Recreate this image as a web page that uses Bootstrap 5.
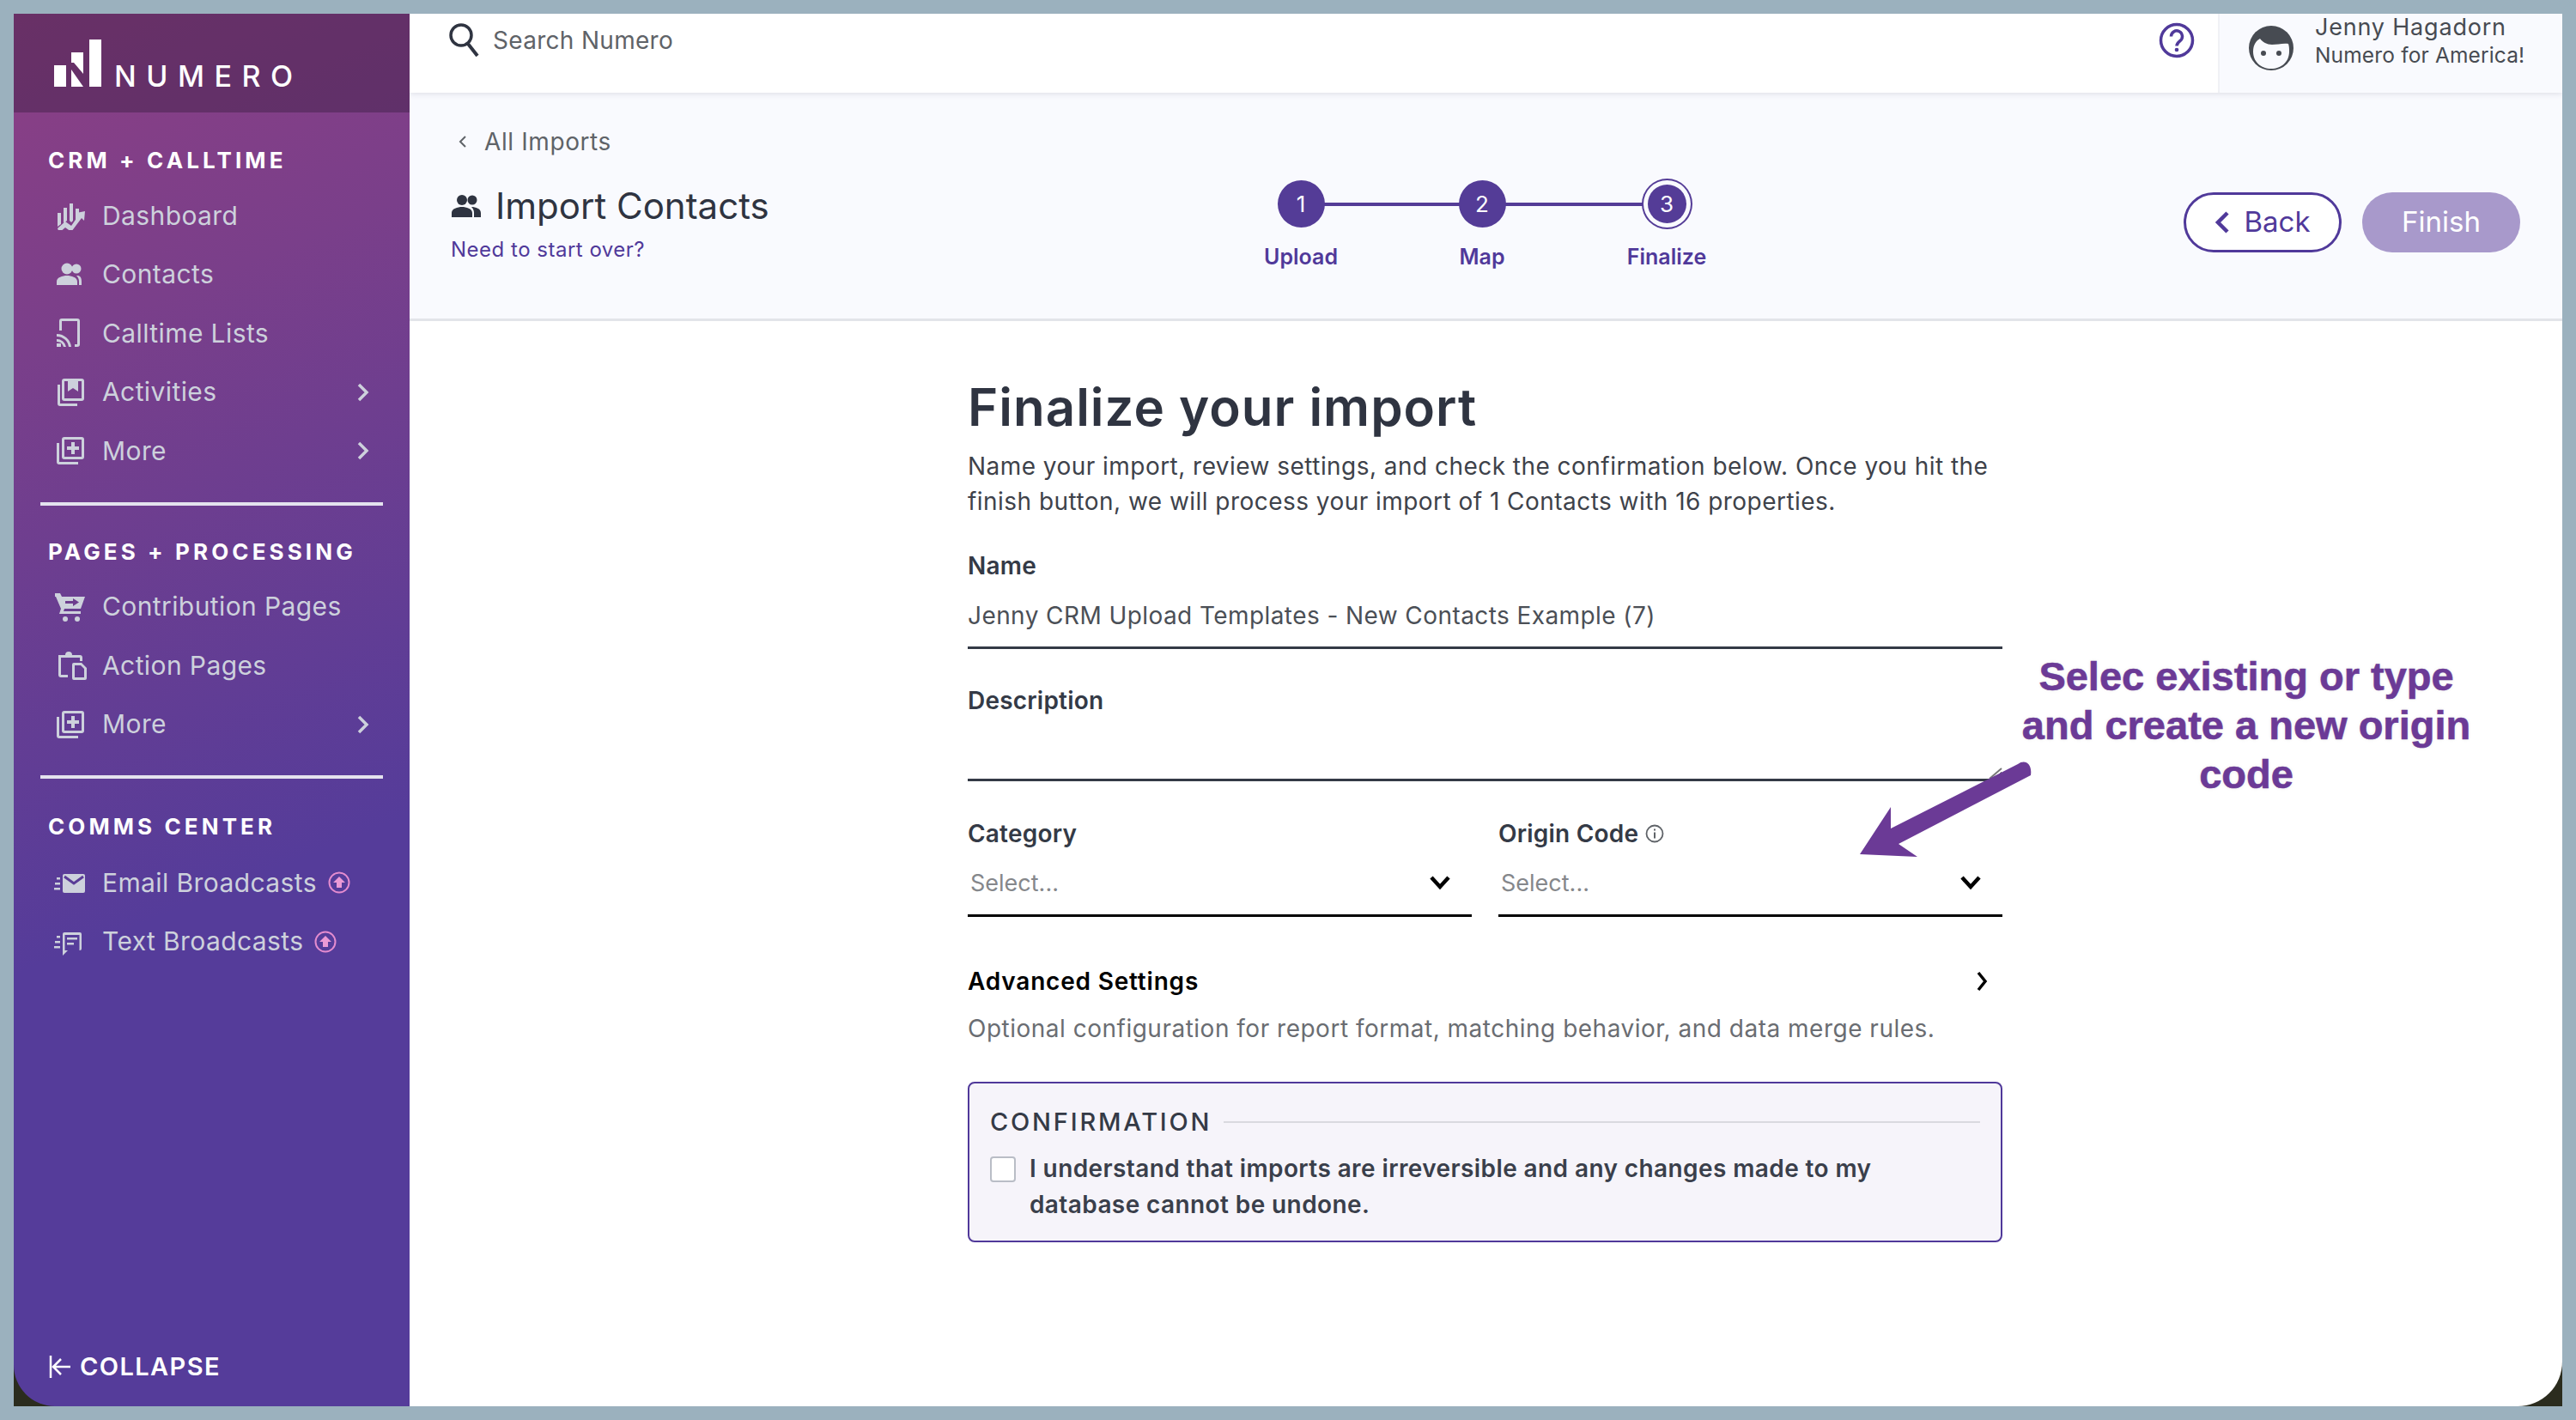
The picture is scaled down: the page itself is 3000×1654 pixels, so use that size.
<!DOCTYPE html>
<html lang="en">
<head>
  <meta charset="UTF-8">
  <meta name="viewport" content="width=device-width, initial-scale=1">
  <title>Import Contacts - Numero</title>

  <link rel="stylesheet" href="https://cdn.jsdelivr.net/npm/bootstrap@5.3.0/dist/css/bootstrap.min.css">

  <style>
    body {
      font-family: Inter, "Open Sans", sans-serif;
      background-color: #9bb1be;
      padding: 16px;
      height: 1654px;
      overflow: hidden;
    }
    .app-frame {
      width: 2968px;
      height: 1622px;
      background-color: #2b2c1e;
      position: relative;
    }
    /* sidebar */
    .side-panel {
      width: 461px;
      flex: none;
      background: linear-gradient(158deg, #8c3f84 0%, #7a3f8a 22%, #553c9a 62%);
      border-bottom-left-radius: 48px;
    }
    .side-brand {
      height: 115px;
      background-color: rgba(30, 20, 40, .32);
      padding: 30px 0 0 47px;
      color: #fff;
    }
    .brand-word {
      font-size: 34px;
      line-height: 38px;
      letter-spacing: 11.5px;
      font-weight: 500;
      margin: 24px 0 0 -4px;
    }
    .side-title {
      color: #fff;
      font-size: 26px;
      line-height: 36px;
      font-weight: 700;
      letter-spacing: 4.1px;
      text-transform: uppercase;
      padding-left: 40px;
    }
    .side-link {
      height: 68.5px;
      color: #cdd1dc;
      font-size: 30px;
      letter-spacing: .4px;
      padding: 0 47px 0 49px;
    }
    .side-link:hover { color: #fff; }
    .side-link .side-icon {
      width: 55px;
      height: 34px;
      margin-right: 10px;
      margin-left: -11px;
      flex: none;
      fill: #cdd1dc;
    }
    .side-rule {
      height: 4px;
      background-color: #e4e2ee;
      opacity: 1;
      border: 0;
      margin: 0 31px;
    }
    .upgrade-dot { width: 26px; height: 26px; margin-left: 13px; flex: none; }
    .collapse-link {
      color: #fff;
      font-size: 29px;
      font-weight: 600;
      letter-spacing: 1.4px;
      line-height: 36px;
      padding-left: 41px;
      margin-bottom: 28px;
    }
    .collapse-arrow { margin-right: 10px; }
    /* top bar */
    .top-strip {
      height: 92px;
      background-color: #fff;
      box-shadow: 0 2px 6px rgba(60, 60, 80, .12);
      position: relative;
    }
    .search-wrap { padding-left: 43px; }
    .search-text { color: #5f6368; font-size: 28px; letter-spacing: .3px; line-height: 40px; margin: 11px 0 0 14px; }
    .help-mark { margin: 10px 27px 0 0; }
    .user-panel {
      width: 401px;
      height: 92px;
      background-color: #f9fafe;
      border-left: 2px solid #f0f1f5;
      padding: 0 0 0 33px;
      color: #474b52;
    }
    .user-face { margin-top: 13px; }
    .user-text { margin-left: 24px; }
    .user-name { font-size: 27px; letter-spacing: .8px; line-height: 32px; }
    .user-org { font-size: 24.5px; letter-spacing: .15px; line-height: 32px; }
    /* page header */
    .head-band {
      height: 266px;
      background-color: #f9fafe;
      border-bottom: 3px solid #e2e4e9;
      padding: 0 49px 0 48px;
      display: grid;
      grid-template-columns: 1fr auto 1fr;
    }
    .crumb-link { color: #5f6368; font-size: 28px; letter-spacing: .6px; line-height: 40px; margin-top: 37px; }
    .crumb-arrow { margin: 0 20px 0 9px; }
    .page-title { color: #2f3441; font-size: 42px; line-height: 60px; font-weight: 400; margin: 25px 0 0; }
    .restart-link { color: #50399a; font-size: 24px; letter-spacing: .5px; line-height: 36px; margin-top: 3px; text-decoration: none; display: block; }
    .step-box { position: relative; text-align: center; padding-top: 102px; }
    .step-dot {
      width: 55px;
      height: 55px;
      line-height: 55px;
      border-radius: 50%;
      background-color: #543c97;
      color: #fff;
      font-size: 26px;
      margin: 0 auto;
      position: relative;
      z-index: 1;
    }
    .step-dot.is-current {
      width: 45px;
      height: 45px;
      line-height: 45px;
      margin: 5px auto 21px;
      box-shadow: 0 0 0 5px #f9fafe, 0 0 0 7px #543c97;
    }
    .step-line {
      position: absolute;
      top: 128px;
      height: 4px;
      left: 50%;
      background-color: #543c97;
    }
    .step-name { color: #50399a; font-size: 25px; line-height: 36px; font-weight: 600; margin-top: 16px; }
    .head-btn {
      height: 70px;
      width: 184px;
      margin-top: 116px;
      border-radius: 35px;
      font-size: 33px;
      padding: 0;
      display: flex;
      align-items: center;
      justify-content: center;
    }
    .back-btn { background-color: #fff; border: 3px solid #50399a; color: #50399a; }
    .finish-btn { background-color: #a899cb; border: 0; color: #fff; opacity: 1; }
    .finish-btn:disabled { background-color: #a899cb; color: #fff; opacity: 1; }
    /* form */
    .form-body { width: 1205px; margin-left: 650px; color: #343a46; }
    .form-heading { font-size: 60px; line-height: 72px; font-weight: 600; letter-spacing: 1px; margin: 64px 0 13px; color: #2f3441; }
    .form-lead { font-size: 28px; letter-spacing: .46px; line-height: 41px; margin: 0; color: #3e424a; }
    .field-label { font-size: 28px; letter-spacing: .2px; line-height: 40px; font-weight: 600; margin: 1px 0 -1px; color: #343a46; }
    .line-input {
      border: 0;
      border-bottom: 3px solid #343a46;
      border-radius: 0;
      background: transparent;
      box-shadow: none;
      font-size: 28px;
      letter-spacing: .42px;
      color: #4b4f56;
      padding: 2px 0 0;
    }
    .line-select {
      height: 78px;
      font-size: 27px;
      color: #85878b;
      border: 0;
      border-bottom: 3px solid #000;
      border-radius: 0;
      padding: 4px 0 0 3px;
      background-position: right 24px center;
      background-size: 26px 18px;
      background-image: url("data:image/svg+xml,%3csvg xmlns='http://www.w3.org/2000/svg' viewBox='0 0 26 18'%3e%3cpath fill='none' stroke='%23000' stroke-width='4.5' d='M3 3l10 11L23 3'/%3e%3c/svg%3e");
    }
    .select-pair { --bs-gutter-x: 31px; }
    .more-title { font-size: 28px; letter-spacing: .8px; line-height: 40px; font-weight: 600; color: #000; margin-top: 55px; }
    .more-arrow { margin-right: 17px; }
    .more-note { font-size: 28px; letter-spacing: .5px; line-height: 40px; color: #6a6d72; margin-top: 15px; }
    .confirm-box {
      height: 187px;
      margin-top: 42px;
      background-color: #f6f4fa;
      border: 2px solid #50399a;
      border-radius: 8px;
      padding: 25px 24px 0 24px;
    }
    .confirm-head { font-size: 29px; line-height: 40px; letter-spacing: 2.8px; font-weight: 500; color: #343a46; }
    .confirm-rule { height: 2px; background-color: #d9d9df; flex-grow: 1; margin-left: 14px; }
    .confirm-check {
      width: 30px;
      height: 30px;
      margin: 20px 16px 0 0;
      border: 2px solid #b9bdc6;
      border-radius: 6px;
      flex: none;
      background-color: #fff;
    }
    .confirm-text { font-size: 28px; letter-spacing: .4px; line-height: 42px; font-weight: 600; color: #3a3f4b; margin: 13px 0 0 0; }
    /* note laid over the screenshot */
    .note-text {
      position: absolute;
      left: 2290px;
      top: 743px;
      width: 620px;
      text-align: center;
      font-family: "Liberation Sans", Arial, sans-serif;
      font-weight: 700;
      font-size: 47px;
      line-height: 57px;
      color: #6b3a96;
      -webkit-text-stroke: .6px #6b3a96;
      text-shadow: 0 0 4px #e8e8e8;
      margin: 0;
    }
    .note-arrow { position: absolute; left: 2100px; top: 860px; width: 300px; height: 160px; }
  </style>
</head>
<body>
  <div class="app-frame d-flex">
    <!-- Sidebar -->
    <aside class="side-panel d-flex flex-column">
      <div class="side-brand d-flex align-items-start">
        <svg width="74" height="58" viewBox="0 0 74 58" fill="#fff">
          <path d="M0 30h14v25H0zM20 15h14v25L23 27h-3zM41 0h14v55H41zM20 35l14 20H20z"/>
        </svg>
        <div class="brand-word">NUMERO</div>
      </div>

      <div class="side-title" style="margin-top:38px">CRM + Calltime</div>
      <nav class="nav flex-column" style="margin-top:12px">
        <a class="nav-link side-link d-flex align-items-center" href="#">
          <svg class="side-icon" viewBox="0 0 55 34"><path d="M13 14h4v13l-4 3zM20 8h4v15l-4 3zM27 3h4v20l-2 2-2-2zM34 9h4v10l-4 4z"/><path d="M13 32l9-8 7 5 9-13-3-2 10-2-1 11-3-3-12 16-7-5-7 6z"/></svg>
          Dashboard
        </a>
        <a class="nav-link side-link d-flex align-items-center" href="#">
          <svg class="side-icon" viewBox="0 0 55 34"><circle cx="24" cy="10" r="6.5"/><circle cx="35" cy="10" r="5.5"/><path d="M12 29v-4c0-5 7-7 12-7s12 2 12 7v4zM38 29v-4c0-3-1-5-3-7 4-.5 6 2 6 7v4z"/></svg>
          Contacts
        </a>
        <a class="nav-link side-link d-flex align-items-center" href="#">
          <svg class="side-icon" viewBox="0 0 55 34"><path d="M18 0h18a3 3 0 0 1 3 3v27a3 3 0 0 1-3 3h-3v-3h3V3H18v11h-3V3a3 3 0 0 1 3-3z"/><path d="M12 18a17 17 0 0 1 17 15h-3a14 14 0 0 0-14-12zM12 24a11 11 0 0 1 11 9h-3a8 8 0 0 0-8-6zM12 29h5v4h-5z"/></svg>
          Calltime Lists
        </a>
        <a class="nav-link side-link d-flex align-items-center" href="#">
          <svg class="side-icon" viewBox="0 0 55 34"><path d="M13 8h3v22h20v3H16a3 3 0 0 1-3-3z"/><path fill-rule="evenodd" d="M21 1h20a3 3 0 0 1 3 3v20a3 3 0 0 1-3 3H21a3 3 0 0 1-3-3V4a3 3 0 0 1 3-3zm0 3v20h20V4h-4v12l-6-4-6 4V4z"/></svg>
          Activities
          <svg class="ms-auto" width="14" height="22" viewBox="0 0 14 22"><path d="M2 2l9 9-9 9" fill="none" stroke="#cdd1dc" stroke-width="3.5"/></svg>
        </a>
        <a class="nav-link side-link d-flex align-items-center" href="#">
          <svg class="side-icon" viewBox="0 0 55 34"><path d="M12 8h3v22h22v3H15a3 3 0 0 1-3-3z"/><path fill-rule="evenodd" d="M21 1h20a3 3 0 0 1 3 3v20a3 3 0 0 1-3 3H21a3 3 0 0 1-3-3V4a3 3 0 0 1 3-3zm0 3v20h20V4zm8 3h4v5h5v4h-5v5h-4v-5h-5v-4h5z"/></svg>
          More
          <svg class="ms-auto" width="14" height="22" viewBox="0 0 14 22"><path d="M2 2l9 9-9 9" fill="none" stroke="#cdd1dc" stroke-width="3.5"/></svg>
        </a>
      </nav>
      <hr class="side-rule" style="margin-top:25px">

      <div class="side-title" style="margin-top:36px">Pages + Processing</div>
      <nav class="nav flex-column" style="margin-top:12px">
        <a class="nav-link side-link d-flex align-items-center" href="#">
          <svg class="side-icon" viewBox="0 0 55 34"><path d="M10 1h6l2 4h27l-5 14H21l-1 3h20v3H15l2-6-6-14h-1z"/><circle cx="22" cy="31" r="3"/><circle cx="36" cy="31" r="3"/><path d="M22 10h9V7l7 4.500-7 4.500v-3h-9z" fill="#6d3d8e"/></svg>
          Contribution Pages
        </a>
        <a class="nav-link side-link d-flex align-items-center" href="#">
          <svg class="side-icon" viewBox="0 0 55 34"><path d="M14 5h8a4 4 0 0 1 8 0h9a3 3 0 0 1 3 3v4h-3V8H17v20h8v3h-8a3 3 0 0 1-3-3z"/><path fill-rule="evenodd" d="M32 14h9l6 6v12a2 2 0 0 1-2 2H32a2 2 0 0 1-2-2V16a2 2 0 0 1 2-2zm1 3v14h11V21l-4-4z"/></svg>
          Action Pages
        </a>
        <a class="nav-link side-link d-flex align-items-center" href="#">
          <svg class="side-icon" viewBox="0 0 55 34"><path d="M12 8h3v22h22v3H15a3 3 0 0 1-3-3z"/><path fill-rule="evenodd" d="M21 1h20a3 3 0 0 1 3 3v20a3 3 0 0 1-3 3H21a3 3 0 0 1-3-3V4a3 3 0 0 1 3-3zm0 3v20h20V4zm8 3h4v5h5v4h-5v5h-4v-5h-5v-4h5z"/></svg>
          More
          <svg class="ms-auto" width="14" height="22" viewBox="0 0 14 22"><path d="M2 2l9 9-9 9" fill="none" stroke="#cdd1dc" stroke-width="3.5"/></svg>
        </a>
      </nav>
      <hr class="side-rule" style="margin-top:25px">

      <div class="side-title" style="margin-top:38px">Comms Center</div>
      <nav class="nav flex-column" style="margin-top:13px">
        <a class="nav-link side-link d-flex align-items-center" href="#">
          <svg class="side-icon" viewBox="0 0 55 34"><path d="M21 7h22a2 2 0 0 1 2 2v18a2 2 0 0 1-2 2H21a2 2 0 0 1-2-2V9a2 2 0 0 1 2-2z"/><path d="M21 10l11 8 11-8" fill="none" stroke="#5a3c97" stroke-width="3"/><path d="M12 11h4v2.500h-4zM10 17h6v2.500h-6zM9 23h7v2.500H9z"/></svg>
          Email Broadcasts
          <svg class="upgrade-dot" viewBox="0 0 26 26"><circle cx="13" cy="13" r="11.500" fill="none" stroke="#e48ccf" stroke-width="2"/><path d="M13 6l7 7h-4v6h-6v-6H6z" fill="#eb9ad6"/></svg>
        </a>
        <a class="nav-link side-link d-flex align-items-center" href="#">
          <svg class="side-icon" viewBox="0 0 55 34"><path fill-rule="evenodd" d="M21 6h18a2 2 0 0 1 2 2v17a2 2 0 0 1-2 2H25l-6 6V8a2 2 0 0 1 2-2zm.500 3v18h17V9z"/><path d="M24 12h12v2.500H24zM24 18h8v2.500h-8zM12 10h4v2.500h-4zM10 16h6v2.500h-6zM9 22h7v2.500H9z"/></svg>
          Text Broadcasts
          <svg class="upgrade-dot" viewBox="0 0 26 26"><circle cx="13" cy="13" r="11.500" fill="none" stroke="#e48ccf" stroke-width="2"/><path d="M13 6l7 7h-4v6h-6v-6H6z" fill="#eb9ad6"/></svg>
        </a>
      </nav>

      <a class="collapse-link mt-auto d-flex align-items-center text-decoration-none" href="#">
        <svg class="collapse-arrow" width="26" height="28" viewBox="0 0 26 28"><path d="M2 1v26M25 14H5M14 5l-9 9 9 9" fill="none" stroke="#fff" stroke-width="2.500"/></svg>
        COLLAPSE
      </a>
    </aside>

    <!-- Main column -->
    <main class="flex-grow-1 bg-white overflow-hidden main-col" style="border-bottom-right-radius:52px">
      <header class="top-strip d-flex justify-content-between">
        <div class="search-wrap d-flex align-items-start">
          <svg class="mt-2" width="40" height="44" viewBox="0 0 40 44"><circle cx="17" cy="17" r="12" fill="none" stroke="#2f3441" stroke-width="3.500"/><path d="M25 27l11 14" stroke="#2f3441" stroke-width="4"/></svg>
          <div class="search-text">Search Numero</div>
        </div>
        <div class="d-flex align-items-start">
          <svg class="help-mark" width="42" height="42" viewBox="0 0 42 42"><circle cx="21" cy="21" r="18.500" fill="none" stroke="#50399a" stroke-width="3.500"/><path d="M14.500 16.500a6.500 6.500 0 1 1 10.500 5c-2.500 2-4 3-4 6" fill="none" stroke="#50399a" stroke-width="3.500"/><circle cx="21" cy="32" r="2.300" fill="#50399a"/></svg>
          <div class="user-panel d-flex align-items-start">
            <svg class="user-face" width="54" height="54" viewBox="0 0 54 54"><circle cx="27" cy="27" r="26" fill="#474b52"/><path d="M6 31c0-8 4-13 8-15 3 4 8 7 14 7 6 0 13-2 19-1 1 3 1 6 1 9 0 12-9 20-21 20S6 43 6 31z" fill="#f9fafe"/><circle cx="18" cy="33" r="3" fill="#474b52"/><circle cx="36" cy="33" r="3" fill="#474b52"/></svg>
            <div class="user-text">
              <div class="user-name">Jenny Hagadorn</div>
              <div class="user-org">Numero for America!</div>
            </div>
          </div>
        </div>
      </header>

      <section class="head-band">
        <div>
          <div class="crumb-link d-flex align-items-center">
            <svg class="crumb-arrow" width="10" height="16" viewBox="0 0 10 16"><path d="M8 2L2 8l6 6" fill="none" stroke="#5f6368" stroke-width="2"/></svg>
            All Imports
          </div>
          <h1 class="page-title d-flex align-items-center">
            <svg class="me-3" width="36" height="28" viewBox="0 0 36 28" fill="#2f3441"><circle cx="13" cy="7" r="6"/><circle cx="25" cy="7" r="5.500"/><path d="M1 27v-5c0-5 7-7 12-7s12 2 12 7v5zM27 27v-5c0-3-1-5-3-7 5 0 11 2 11 7v5z"/></svg>
            Import Contacts
          </h1>
          <a class="restart-link" href="#">Need to start over?</a>
        </div>

        <div class="d-flex">
          <div class="step-box" style="width:210px">
            <div class="step-line" style="width:211px"></div>
            <div class="step-dot">1</div>
            <div class="step-name">Upload</div>
          </div>
          <div class="step-box" style="width:212px">
            <div class="step-line" style="width:215px"></div>
            <div class="step-dot">2</div>
            <div class="step-name">Map</div>
          </div>
          <div class="step-box" style="width:218px">
            <div class="step-dot is-current">3</div>
            <div class="step-name">Finalize</div>
          </div>
        </div>

        <div class="d-flex justify-content-end gap-4">
          <button class="btn head-btn back-btn" type="button">
            <svg class="me-3" width="18" height="28" viewBox="0 0 18 28"><path d="M15 3L4 14l11 11" fill="none" stroke="#50399a" stroke-width="4.500"/></svg>
            Back
          </button>
          <button class="btn head-btn finish-btn" type="button" disabled>Finish</button>
        </div>
      </section>

      <form class="form-body">
        <h2 class="form-heading">Finalize your import</h2>
        <p class="form-lead">Name your import, review settings, and check the confirmation below. Once you hit the<br>finish button, we will process your import of 1 Contacts with 16 properties.</p>

        <label class="field-label d-block" style="margin-top:34px">Name</label>
        <input class="form-control line-input" style="height:78px" type="text" value="Jenny CRM Upload Templates - New Contacts Example (7)">

        <label class="field-label d-block" style="margin-top:40px">Description</label>
        <textarea class="form-control line-input" style="height:75px" rows="1"></textarea>

        <div class="row select-pair" style="margin-top:40px">
          <div class="col-6">
            <label class="field-label d-block">Category</label>
            <select class="form-select line-select"><option>Select...</option></select>
          </div>
          <div class="col-6">
            <label class="field-label d-flex align-items-center">
              Origin Code
              <svg class="ms-2" width="22" height="22" viewBox="0 0 22 22"><circle cx="11" cy="11" r="9.500" fill="none" stroke="#5f6368" stroke-width="1.800"/><path d="M11 9.500v7M11 5.500v2" stroke="#5f6368" stroke-width="2"/></svg>
            </label>
            <select class="form-select line-select"><option>Select...</option></select>
          </div>
        </div>

        <div class="more-title d-flex justify-content-between align-items-center">
          Advanced Settings
          <svg class="more-arrow" width="14" height="26" viewBox="0 0 14 26"><path d="M3 3l8 10-8 10" fill="none" stroke="#000" stroke-width="3.500"/></svg>
        </div>
        <div class="more-note">Optional configuration for report format, matching behavior, and data merge rules.</div>

        <div class="confirm-box">
          <div class="d-flex align-items-center">
            <div class="confirm-head">CONFIRMATION</div>
            <div class="confirm-rule"></div>
          </div>
          <div class="d-flex align-items-start">
            <input class="form-check-input confirm-check" type="checkbox" id="confirmCheck">
            <label class="confirm-text" for="confirmCheck">I understand that imports are irreversible and any changes made to my<br>database cannot be undone.</label>
          </div>
        </div>
      </form>
    </main>

    <!-- Annotation on top of the screenshot -->
    <svg class="note-arrow" viewBox="0 0 300 160">
      <g transform="translate(-16 -16)">
        <path d="M217 47l14-12" stroke="#777" stroke-width="2" fill="none"/>
        <path d="M250 30c8-6 17-1 15 13L111 123l22 15-67-3 36-55v25z" fill="#6b3a96"/>
      </g>
    </svg>
    <p class="note-text">Selec existing or type<br>and create a new origin<br>code</p>
  </div>

  <script src="https://cdn.jsdelivr.net/npm/bootstrap@5.3.0/dist/js/bootstrap.bundle.min.js"></script>
</body>
</html>
